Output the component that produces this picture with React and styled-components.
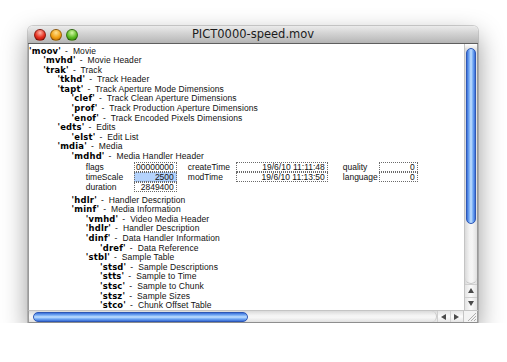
import React from 'react';
import styled, { createGlobalStyle } from 'styled-components';

const GlobalStyle = createGlobalStyle`
  html, body {
    margin: 0;
    padding: 0;
    background: #ffffff;
  }
  body {
    font-family: "Liberation Sans", Arial, sans-serif;
  }
`;

const atoms = [
  { level: 0, code: 'moov', desc: 'Movie' },
  { level: 1, code: 'mvhd', desc: 'Movie Header' },
  { level: 1, code: 'trak', desc: 'Track' },
  { level: 2, code: 'tkhd', desc: 'Track Header' },
  { level: 2, code: 'tapt', desc: 'Track Aperture Mode Dimensions' },
  { level: 3, code: 'clef', desc: 'Track Clean Aperture Dimensions' },
  { level: 3, code: 'prof', desc: 'Track Production Aperture Dimensions' },
  { level: 3, code: 'enof', desc: 'Track Encoded Pixels Dimensions' },
  { level: 2, code: 'edts', desc: 'Edits' },
  { level: 3, code: 'elst', desc: 'Edit List' },
  { level: 2, code: 'mdia', desc: 'Media' },
  { level: 3, code: 'mdhd', desc: 'Media Handler Header', fields: true },
  { level: 3, code: 'hdlr', desc: 'Handler Description' },
  { level: 3, code: 'minf', desc: 'Media Information' },
  { level: 4, code: 'vmhd', desc: 'Video Media Header' },
  { level: 4, code: 'hdlr', desc: 'Handler Description' },
  { level: 4, code: 'dinf', desc: 'Data Handler Information' },
  { level: 5, code: 'dref', desc: 'Data Reference' },
  { level: 4, code: 'stbl', desc: 'Sample Table' },
  { level: 5, code: 'stsd', desc: 'Sample Descriptions' },
  { level: 5, code: 'stts', desc: 'Sample to Time' },
  { level: 5, code: 'stsc', desc: 'Sample to Chunk' },
  { level: 5, code: 'stsz', desc: 'Sample Sizes' },
  { level: 5, code: 'stco', desc: 'Chunk Offset Table' },
];

const INDENT = 14.2;

function MediaHeaderFields() {
  return (
    <Fields>
      <FieldLabel>flags</FieldLabel>
      <FieldBox>00000000</FieldBox>
      <FieldLabel $pad={11}>createTime</FieldLabel>
      <FieldBox>19/6/10 11:11:48</FieldBox>
      <FieldLabel $pad={15}>quality</FieldLabel>
      <FieldBox>0</FieldBox>

      <FieldLabel>timeScale</FieldLabel>
      <FieldBox $selected>2500</FieldBox>
      <FieldLabel $pad={11}>modTime</FieldLabel>
      <FieldBox>19/6/10 11:13:50</FieldBox>
      <FieldLabel $pad={15}>language</FieldLabel>
      <FieldBox>0</FieldBox>

      <FieldLabel>duration</FieldLabel>
      <FieldBox>2849400</FieldBox>
    </Fields>
  );
}

function Arrow({ dir }) {
  const pts = {
    up: '1,6 4,1 7,6',
    down: '1,1 4,6 7,1',
    left: '6,1 1,4 6,7',
    right: '1,1 6,4 1,7',
  }[dir];
  return (
    <svg width="8" height="8" viewBox="0 0 8 8">
      <polygon points={pts} fill="#4a4a4a" />
    </svg>
  );
}

export default function App() {
  return (
    <>
      <GlobalStyle />
      <Page>
        <Window>
          <TitleBar>
            <Lights>
              <Light $c1="#ffb4a6" $c2="#e52e1e" $c3="#9c0f04" />
              <Light $c1="#ffe08e" $c2="#f2a114" $c3="#b05c00" />
              <Light $c1="#d6f7a8" $c2="#5cbc22" $c3="#2c7806" />
            </Lights>
            <Title>PICT0000-speed.mov</Title>
          </TitleBar>
          <Main>
            <Content>
              {atoms.map((a, i) => (
                <React.Fragment key={i}>
                  <Line $level={a.level}>
                    <Code>'{a.code}'</Code>
                    <Desc>-&nbsp; {a.desc}</Desc>
                  </Line>
                  {a.fields && <MediaHeaderFields />}
                </React.Fragment>
              ))}
            </Content>
            <VScroll>
              <VCap />
              <VThumb />
              <VTrack />
              <VButton><Arrow dir="up" /></VButton>
              <VButton><Arrow dir="down" /></VButton>
            </VScroll>
          </Main>
          <Bottom>
            <HScroll>
              <HCap />
              <HThumb />
              <HTrack />
              <HButton><Arrow dir="left" /></HButton>
              <HButton><Arrow dir="right" /></HButton>
            </HScroll>
            <Grip>
              <svg width="11" height="11" viewBox="0 0 11 11">
                <line x1="10" y1="2" x2="2" y2="10" stroke="#9a9a9a" strokeWidth="0.8" />
                <line x1="10" y1="5" x2="5" y2="10" stroke="#9a9a9a" strokeWidth="0.8" />
                <line x1="10" y1="8" x2="8" y2="10" stroke="#9a9a9a" strokeWidth="0.8" />
              </svg>
            </Grip>
          </Bottom>
        </Window>
      </Page>
    </>
  );
}

const Page = styled.div`
  padding: 26px 0 0 28px;
`;

const Window = styled.div`
  width: 450px;
  height: 297px;
  display: flex;
  flex-direction: column;
  background: #ffffff;
  border-radius: 5px 5px 0 0;
  box-shadow: 0 10px 26px rgba(0, 0, 0, 0.42), 0 0 0 1px rgba(0, 0, 0, 0.16);
  overflow: hidden;
`;

const TitleBar = styled.div`
  position: relative;
  height: 17px;
  flex: none;
  display: flex;
  align-items: center;
  justify-content: center;
  background: linear-gradient(#ebebeb, #d2d2d2 45%, #c0c0c0 80%, #b4b4b4);
  border-bottom: 1px solid #5e5e5e;
`;

const Lights = styled.div`
  position: absolute;
  left: 6px;
  top: 3px;
  display: flex;
  gap: 4px;
`;

const Light = styled.span`
  width: 12px;
  height: 12px;
  border-radius: 50%;
  box-sizing: border-box;
  border: 1px solid rgba(0, 0, 0, 0.35);
  background: radial-gradient(circle at 50% 28%, ${(p) => p.$c1} 0%, ${(p) => p.$c2} 55%, ${(p) => p.$c3} 100%);
`;

const Title = styled.div`
  font-family: "DejaVu Sans", "Liberation Sans", sans-serif;
  font-size: 11.5px;
  color: #1c1c1c;
  line-height: 17px;
`;

const Main = styled.div`
  flex: 1;
  display: flex;
  min-height: 0;
  border-left: 1px solid #9a9a9a;
`;

const Content = styled.div`
  flex: 1;
  overflow: hidden;
  padding-top: 2.5px;
`;

const Line = styled.div`
  display: flex;
  align-items: baseline;
  height: 9.6px;
  line-height: 9.6px;
  white-space: nowrap;
  padding-left: ${(p) => p.$level * INDENT}px;
  color: #000;
`;

const Code = styled.span`
  font-family: "DejaVu Sans", Verdana, sans-serif;
  font-weight: bold;
  font-size: 8.4px;
  letter-spacing: 0.2px;
  margin-right: 4px;
`;

const Desc = styled.span`
  font-family: "Liberation Sans", Arial, sans-serif;
  font-size: 8.5px;
  letter-spacing: 0.1px;
  color: #111;
`;

const Fields = styled.div`
  display: grid;
  grid-template-columns: 48px 43px 59px 92px 51px 39px;
  grid-auto-rows: 10px;
  margin: 0 0 4px ${4 * INDENT}px;
  font-family: "Liberation Sans", Arial, sans-serif;
  font-size: 8.5px;
  color: #111;
`;

const FieldLabel = styled.div`
  line-height: 10px;
  padding-left: ${(p) => p.$pad || 0}px;
  white-space: nowrap;
`;

const FieldBox = styled.div`
  box-sizing: border-box;
  height: 10px;
  line-height: 8px;
  border: 1px dotted #6a6a6a;
  text-align: right;
  padding-right: 2px;
  white-space: nowrap;
  background: ${(p) => (p.$selected ? '#b4d3fd' : 'transparent')};
`;

const VScroll = styled.div`
  width: 12px;
  flex: none;
  display: flex;
  flex-direction: column;
  align-items: stretch;
  border-left: 1px solid #c4c4c4;
  border-right: 1px solid #9a9a9a;
  background: linear-gradient(to right, #dadada, #f4f4f4 40%, #f6f6f6 60%, #e0e0e0);
`;

const VCap = styled.div`
  height: 4px;
  background: linear-gradient(#ffffff, #e8e8e8);
`;

const VThumb = styled.div`
  height: 176px;
  margin: 0 1px;
  border-radius: 6px;
  box-sizing: border-box;
  border: 1px solid #2d57b5;
  background: linear-gradient(to right, #3a6fd8 0%, #79aef6 28%, #c4e1ff 50%, #79aef6 72%, #3a6fd8 100%);
`;

const VTrack = styled.div`
  flex: 1;
  border-radius: 0 0 6px 6px;
  border-bottom: 1px solid #c8c8c8;
`;

const VButton = styled.div`
  height: 12px;
  display: flex;
  align-items: center;
  justify-content: center;
  border-top: 1px solid #cfcfcf;
  background: linear-gradient(to right, #e4e4e4, #fbfbfb 50%, #e4e4e4);
`;

const Bottom = styled.div`
  height: 11px;
  flex: none;
  display: flex;
  border-top: 1px solid #c4c4c4;
  border-left: 1px solid #9a9a9a;
  border-bottom: 1px solid #8e8e8e;
`;

const HScroll = styled.div`
  flex: 1;
  display: flex;
  background: linear-gradient(#dadada, #f4f4f4 40%, #f6f6f6 60%, #e0e0e0);
`;

const HCap = styled.div`
  width: 4px;
`;

const HThumb = styled.div`
  width: 215px;
  margin: 0.5px 0;
  border-radius: 6px;
  box-sizing: border-box;
  border: 1px solid #2d57b5;
  background: linear-gradient(#3a6fd8 0%, #79aef6 28%, #c4e1ff 50%, #79aef6 72%, #3a6fd8 100%);
`;

const HTrack = styled.div`
  flex: 1;
  border-radius: 0 6px 6px 0;
  border-right: 1px solid #c8c8c8;
`;

const HButton = styled.div`
  width: 12px;
  display: flex;
  align-items: center;
  justify-content: center;
  border-left: 1px solid #cfcfcf;
  background: linear-gradient(#e4e4e4, #fbfbfb 50%, #e4e4e4);
`;

const Grip = styled.div`
  width: 13px;
  flex: none;
  display: flex;
  align-items: flex-end;
  justify-content: flex-end;
  border-left: 1px solid #c4c4c4;
  border-right: 1px solid #9a9a9a;
  background: #f2f2f2;
`;
